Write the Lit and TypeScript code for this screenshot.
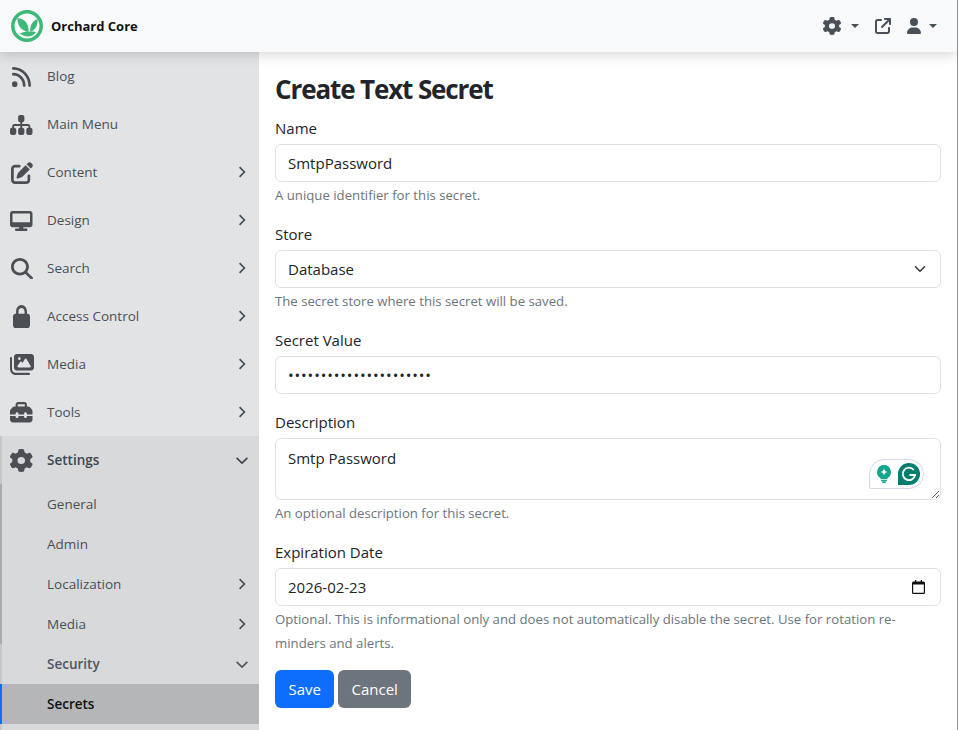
import { LitElement, html, css, svg } from 'lit';
import { customElement } from 'lit/decorators.js';

// w, h are the drawn size; box is the part of the FontAwesome glyph that gets stretched into it
type Icon = { w: number; h: number; box: string; d: string };

const ICONS: Record<string, Icon> = {
  rss: { w: 19, h: 20, box: '0 32 448 448', d: 'M0 64C0 46.3 14.3 32 32 32c229.8 0 416 186.2 416 416c0 17.7-14.3 32-32 32s-32-14.3-32-32C384 253.6 226.4 96 32 96C14.3 96 0 81.7 0 64zM0 416a64 64 0 1 1 128 0A64 64 0 1 1 0 416zM32 160c159.1 0 288 128.9 288 288c0 17.7-14.3 32-32 32s-32-14.3-32-32c0-123.7-100.3-224-224-224c-17.7 0-32-14.3-32-32s14.3-32 32-32z' },
  sitemap: { w: 22.5, h: 20, box: '0 32 576 448', d: 'M208 80c0-26.5 21.5-48 48-48h64c26.5 0 48 21.5 48 48v64c0 26.5-21.5 48-48 48h-8v40H464c30.9 0 56 25.1 56 56v32h8c26.5 0 48 21.5 48 48v64c0 26.5-21.5 48-48 48H464c-26.5 0-48-21.5-48-48V368c0-26.5 21.5-48 48-48h8V288c0-4.4-3.6-8-8-8H312v40h8c26.5 0 48 21.5 48 48v64c0 26.5-21.5 48-48 48H256c-26.5 0-48-21.5-48-48V368c0-26.5 21.5-48 48-48h8V280H112c-4.4 0-8 3.6-8 8v32h8c26.5 0 48 21.5 48 48v64c0 26.5-21.5 48-48 48H48c-26.5 0-48-21.5-48-48V368c0-26.5 21.5-48 48-48h8V288c0-30.9 25.1-56 56-56H264V192h-8c-26.5 0-48-21.5-48-48V80z' },
  pen: { w: 22, h: 22, box: '0 0 512 512', d: 'M471.6 21.7c-21.9-21.9-57.3-21.9-79.2 0L362.3 51.7l97.9 97.9 30.1-30.1c21.9-21.9 21.9-57.3 0-79.2L471.6 21.7zm-299.2 220c-6.1 6.1-10.8 13.6-13.5 21.9l-29.6 88.8c-2.9 8.6-.6 18.1 5.8 24.6s15.9 8.7 24.6 5.8l88.8-29.6c8.2-2.7 15.7-7.4 21.9-13.5L437.7 172.3 339.7 74.3 172.4 241.7zM96 64C43 64 0 107 0 160V416c0 53 43 96 96 96H352c53 0 96-43 96-96V320c0-17.7-14.3-32-32-32s-32 14.3-32 32v96c0 17.7-14.3 32-32 32H96c-17.7 0-32-14.3-32-32V160c0-17.7 14.3-32 32-32h96c17.7 0 32-14.3 32-32s-14.3-32-32-32H96z' },
  desktop: { w: 22.5, h: 20, box: '0 0 576 512', d: 'M64 0C28.7 0 0 28.7 0 64V352c0 35.3 28.7 64 64 64H240l-10.7 32H160c-17.7 0-32 14.3-32 32s14.3 32 32 32H416c17.7 0 32-14.3 32-32s-14.3-32-32-32H346.7L336 416H512c35.3 0 64-28.7 64-64V64c0-35.3-28.7-64-64-64H64zM512 64V288H64V64H512z' },
  search: { w: 22, h: 21.5, box: '0 0 512 512', d: 'M416 208c0 45.9-14.9 88.3-40 122.7L502.6 457.4c12.5 12.5 12.5 32.8 0 45.3s-32.8 12.5-45.3 0L330.7 376c-34.4 25.2-76.8 40-122.7 40C93.1 416 0 322.9 0 208S93.1 0 208 0S416 93.1 416 208zM208 352a144 144 0 1 0 0-288 144 144 0 1 0 0 288z' },
  lock: { w: 17, h: 23, box: '0 0 448 512', d: 'M144 144v48H304V144c0-44.2-35.8-80-80-80s-80 35.8-80 80zM80 192V144C80 64.5 144.5 0 224 0s144 64.5 144 144v48h16c35.3 0 64 28.7 64 64V448c0 35.3-28.7 64-64 64H64c-35.3 0-64-28.7-64-64V256c0-35.3 28.7-64 64-64H80z' },
  images: { w: 24, h: 21, box: '0 32 576 448', d: 'M160 32c-35.3 0-64 28.7-64 64V320c0 35.3 28.7 64 64 64H512c35.3 0 64-28.7 64-64V96c0-35.3-28.7-64-64-64H160zM396 138.7l96 144c4.9 7.4 5.4 16.8 1.2 24.6S480.9 320 472 320H328 280 200c-9.2 0-17.6-5.3-21.6-13.6s-2.9-18.2 2.9-25.4l64-80c4.6-5.7 11.4-9 18.7-9s14.2 3.3 18.7 9l17.3 21.6 56-84C360.5 132 368 128 376 128s15.5 4 20 10.7zM192 128a32 32 0 1 1 64 0 32 32 0 1 1 -64 0zM48 120c0-13.3-10.7-24-24-24S0 106.7 0 120V344c0 75.1 60.9 136 136 136H456c13.3 0 24-10.7 24-24s-10.7-24-24-24H136c-48.6 0-88-39.4-88-88V120z' },
  toolbox: { w: 22.5, h: 20.5, box: '0 32 512 448', d: 'M176 88v40H336V88c0-4.4-3.6-8-8-8H184c-4.4 0-8 3.6-8 8zm-48 40V88c0-30.9 25.1-56 56-56H328c30.9 0 56 25.1 56 56v40h28.1c12.7 0 24.9 5.1 33.9 14.1l51.9 51.9c9 9 14.1 21.2 14.1 33.9V304H384V288c0-17.7-14.3-32-32-32s-32 14.3-32 32v16H192V288c0-17.7-14.3-32-32-32s-32 14.3-32 32v16H0V227.9c0-12.7 5.1-24.9 14.1-33.9l51.9-51.9c9-9 21.2-14.1 33.9-14.1H128zM0 416V336H128v16c0 17.7 14.3 32 32 32s32-14.3 32-32V336H320v16c0 17.7 14.3 32 32 32s32-14.3 32-32V336H512v80c0 35.3-28.7 64-64 64H64c-35.3 0-64-28.7-64-64z' },
  gear: { w: 22.5, h: 23, box: '16 0 480 512', d: 'M495.9 166.6c3.2 8.7 .5 18.4-6.4 24.6l-43.3 39.4c1.1 8.3 1.7 16.8 1.7 25.4s-.6 17.1-1.7 25.4l43.3 39.4c6.9 6.2 9.6 15.9 6.4 24.6c-4.4 11.9-9.7 23.3-15.8 34.3l-4.7 8.1c-6.6 11-14 21.4-22.1 31.2c-5.9 7.2-15.7 9.6-24.5 6.8l-55.7-17.7c-13.4 10.3-28.2 18.9-44 25.4l-12.5 57.1c-2 9.1-9 16.3-18.2 17.8c-13.8 2.3-28 3.5-42.5 3.5s-28.7-1.2-42.5-3.5c-9.2-1.5-16.2-8.7-18.2-17.8l-12.5-57.1c-15.8-6.5-30.6-15.1-44-25.4L83.1 425.9c-8.8 2.8-18.6 .3-24.5-6.8c-8.1-9.8-15.5-20.2-22.1-31.2l-4.7-8.1c-6.1-11-11.4-22.4-15.8-34.3c-3.2-8.7-.5-18.4 6.4-24.6l43.3-39.4C64.6 273.1 64 264.6 64 256s.6-17.1 1.7-25.4L22.4 191.2c-6.9-6.2-9.6-15.9-6.4-24.6c4.4-11.9 9.7-23.3 15.8-34.3l4.7-8.1c6.6-11 14-21.4 22.1-31.2c5.9-7.2 15.7-9.6 24.5-6.8l55.7 17.7c13.4-10.3 28.2-18.9 44-25.4l12.5-57.1c2-9.1 9-16.3 18.2-17.8C227.3 1.2 241.5 0 256 0s28.7 1.2 42.5 3.5c9.2 1.5 16.2 8.7 18.2 17.8l12.5 57.1c15.8 6.5 30.6 15.1 44 25.4l55.7-17.7c8.8-2.8 18.6-.3 24.5 6.8c8.1 9.8 15.5 20.2 22.1 31.2l4.7 8.1c6.1 11 11.4 22.4 15.8 34.3zM256 336a80 80 0 1 0 0-160 80 80 0 1 0 0 160z' },
  user: { w: 14, h: 16, box: '0 0 448 512', d: 'M224 256A128 128 0 1 0 224 0a128 128 0 1 0 0 256zm-45.7 48C79.8 304 0 383.8 0 482.3C0 498.7 13.3 512 29.7 512H418.3c16.4 0 29.7-13.3 29.7-29.7C448 383.8 368.2 304 269.7 304H178.3z' },
  external: { w: 16, h: 16, box: '0 0 512 512', d: 'M320 0c-17.7 0-32 14.3-32 32s14.3 32 32 32h82.7L201.4 265.4c-12.5 12.5-12.5 32.8 0 45.3s32.8 12.5 45.3 0L448 109.3V192c0 17.7 14.3 32 32 32s32-14.3 32-32V32c0-17.7-14.3-32-32-32H320zM80 32C35.8 32 0 67.8 0 112V432c0 44.2 35.8 80 80 80H400c44.2 0 80-35.8 80-80V320c0-17.7-14.3-32-32-32s-32 14.3-32 32V432c0 8.8-7.2 16-16 16H80c-8.8 0-16-7.2-16-16V112c0-8.8 7.2-16 16-16H192c17.7 0 32-14.3 32-32s-14.3-32-32-32H80z' },
};

const icon = (name: string, w?: number, h?: number) => {
  const i = ICONS[name];
  return html`<svg width=${w ?? i.w} height=${h ?? i.h} viewBox=${i.box} preserveAspectRatio="none" fill="currentColor">${svg`<path d=${i.d}></path>`}</svg>`;
};

const chevronRight = html`<svg class="chev" width="12" height="12" viewBox="0 0 12 12"><path d="M3.6 1.2 8.4 6l-4.8 4.8" fill="none" stroke="currentColor" stroke-width="1.7"></path></svg>`;
const chevronDown = html`<svg class="chev down" width="14" height="12" viewBox="0 0 14 12"><path d="M1.6 3.8 7 9l5.4-5.2" fill="none" stroke="currentColor" stroke-width="1.7"></path></svg>`;

const TOP_ITEMS = [
  { label: 'Blog', icon: 'rss', more: false },
  { label: 'Main Menu', icon: 'sitemap', more: false },
  { label: 'Content', icon: 'pen', more: true },
  { label: 'Design', icon: 'desktop', more: true },
  { label: 'Search', icon: 'search', more: true },
  { label: 'Access Control', icon: 'lock', more: true },
  { label: 'Media', icon: 'images', more: true },
  { label: 'Tools', icon: 'toolbox', more: true },
];

const SUB_ITEMS = [
  { label: 'General', more: false },
  { label: 'Admin', more: false },
  { label: 'Localization', more: true },
  { label: 'Media', more: true },
];

@customElement('app-root')
export class AppRoot extends LitElement {
  static override styles = css`
    :host {
      display: flex;
      flex-direction: column;
      height: 730px;
      overflow: hidden;
      font-family: "Open Sans", "Noto Sans", sans-serif;
      font-size: 15px;
      color: #212529;
      background: #fff;
      box-sizing: border-box;
      border-right: 1px solid #8a8a8a;
    }
    * { box-sizing: border-box; }

    .navbar {
      flex: none;
      height: 52px;
      display: flex;
      align-items: center;
      padding: 0 20px 0 11px;
      background: #f8f9fa;
      box-shadow: 0 2px 12px rgba(0, 0, 0, 0.18);
      position: relative;
      z-index: 2;
    }
    .brand {
      display: flex;
      align-items: center;
      gap: 8px;
      font-size: 13px;
      font-weight: 700;
      color: #111;
    }
    .actions {
      margin-left: auto;
      display: flex;
      align-items: center;
      color: #495057;
    }
    .actions svg { display: block; }
    .caret {
      width: 0;
      height: 0;
      border-left: 4px solid transparent;
      border-right: 4px solid transparent;
      border-top: 4px solid currentColor;
    }
    .gear { margin-right: 10px; }
    .ext { margin: 0 16px; }
    .usr { margin-right: 8px; }

    .body {
      flex: 1;
      display: flex;
      min-height: 0;
    }

    .sidebar {
      flex: none;
      width: 259px;
      background: #e2e3e5;
      color: #495057;
      font-size: 13.5px;
      overflow: hidden;
    }
    .item {
      display: flex;
      align-items: center;
      height: 48px;
      padding-right: 10px;
    }
    .item .ico {
      flex: none;
      width: 47px;
      padding: 1px 13px 0 9px;
      display: flex;
      justify-content: center;
      color: #4b4f53;
    }
    .chev { margin-left: auto; margin-right: 1px; }
    .chev.down { margin-right: 0; }

    .group {
      background: #d8d9db;
      border-left: 2px solid #c6c7c9;
    }
    .group .item.open { font-weight: 600; color: #3f464d; }
    .group .item.open .ico { width: 45px; padding-left: 7px; }
    .subs { border-left: 2px solid #a9aaac; margin-left: -2px; }
    .sub {
      display: flex;
      align-items: center;
      height: 40px;
      padding-left: 45px;
      padding-right: 10px;
    }
    .sub.sec { margin-left: -2px; border-left: 2px solid #c6c7c9; font-weight: 600; color: #50565c; }
    .sub.active {
      margin-left: -2px;
      border-left: 2px solid #0d6efd;
      background: #b5b6b8;
      color: #111;
      font-weight: 600;
    }

    .main {
      flex: 1;
      min-width: 0;
      padding: 20px 16px 0;
    }
    h1 {
      margin: 0 0 11px;
      font-size: 26px;
      line-height: 34px;
      font-weight: 700;
      letter-spacing: -1.12px;
      color: #212529;
    }
    .field { margin-bottom: 16px; }
    .field.bare { margin-bottom: 17px; }
    label {
      display: block;
      line-height: 22px;
      margin-bottom: 5px;
    }
    .control {
      display: block;
      width: 100%;
      height: 38px;
      padding: 0 12px;
      border: 1px solid #dee2e6;
      border-radius: 6px;
      background: #fff;
      color: #212529;
      font: inherit;
      outline: none;
    }
    input[type="password"] { letter-spacing: 0.9px; }
    select.control {
      appearance: none;
      background-image: url("data:image/svg+xml,%3csvg xmlns='http://www.w3.org/2000/svg' viewBox='0 0 16 16'%3e%3cpath fill='none' stroke='%23343a40' stroke-linecap='round' stroke-linejoin='round' stroke-width='2' d='m2 5 6 6 6-6'/%3e%3c/svg%3e");
      background-repeat: no-repeat;
      background-position: right 12px center;
      background-size: 16px 12px;
    }
    .area { position: relative; }
    textarea.control {
      height: 62px;
      padding: 7px 12px;
      line-height: 24px;
      resize: vertical;
    }
    .grammarly {
      position: absolute;
      right: 17px;
      bottom: 11px;
      width: 55px;
      height: 30px;
      display: flex;
      align-items: center;
      gap: 6px;
      padding-left: 6px;
      background: #fff;
      border: 1px solid #d6d6e6;
      border-radius: 15px 15px 15px 2px;
    }
    .calendar {
      position: absolute;
      right: 16px;
      top: 12px;
      display: block;
    }
    .help {
      margin-top: 1px;
      font-size: 13.2px;
      line-height: 24px;
      color: #6c757d;
    }
    .buttons {
      display: flex;
      gap: 4px;
      margin-top: -1px;
    }
    button {
      height: 38px;
      padding: 0 13.5px;
      border: 0;
      border-radius: 6px;
      color: #fff;
      font: inherit;
    }
    .save { background: #0d6efd; }
    .cancel { background: #6c757d; padding: 0 13px; }
  `;

  override render() {
    return html`
      <header class="navbar">
        <div class="brand">
          <svg width="32" height="32" viewBox="0 0 32 32">
            <circle cx="16" cy="16" r="14.2" fill="#fff" stroke="#3cb878" stroke-width="3.5"></circle>
            <path d="M6.5 8C13 8.5 18 13 17.5 22 11 21 6 16 6.5 8z" fill="#3cb878"></path>
            <path d="M26.5 9C27 15 24.5 20 19.5 22 18.5 16 21 11 26.5 9z" fill="#3cb878"></path>
            <path d="M9 23.5C13 21.5 19 21 25 22 21.5 27.5 14 28 9 23.5z" fill="#3cb878"></path>
          </svg>
          <span>Orchard Core</span>
        </div>
        <div class="actions">
          <span class="gear">${icon('gear', 18, 18)}</span>
          <span class="caret"></span>
          <span class="ext">${icon('external')}</span>
          <span class="usr">${icon('user')}</span>
          <span class="caret"></span>
        </div>
      </header>
      <div class="body">
        <nav class="sidebar">
          ${TOP_ITEMS.map(i => html`
            <div class="item">
              <span class="ico">${icon(i.icon)}</span>
              <span>${i.label}</span>
              ${i.more ? chevronRight : null}
            </div>
          `)}
          <div class="group">
            <div class="item open">
              <span class="ico">${icon('gear')}</span>
              <span>Settings</span>
              ${chevronDown}
            </div>
            <div class="subs">
              ${SUB_ITEMS.map(i => html`
                <div class="sub">
                  <span>${i.label}</span>
                  ${i.more ? chevronRight : null}
                </div>
              `)}
            </div>
            <div class="sub sec">
              <span>Security</span>
              ${chevronDown}
            </div>
            <div class="sub active"><span>Secrets</span></div>
            <div class="sub"></div>
          </div>
        </nav>
        <main class="main">
          <h1>Create Text Secret</h1>
          <div class="field">
            <label>Name</label>
            <input class="control" type="text" .value=${'SmtpPassword'} />
            <div class="help">A unique identifier for this secret.</div>
          </div>
          <div class="field">
            <label>Store</label>
            <select class="control"><option>Database</option></select>
            <div class="help">The secret store where this secret will be saved.</div>
          </div>
          <div class="field bare">
            <label>Secret Value</label>
            <input class="control" type="password" .value=${'abcdefghijklmnopqrstuv'} />
          </div>
          <div class="field">
            <label>Description</label>
            <div class="area">
              <textarea class="control" .value=${'Smtp Password'}></textarea>
              <div class="grammarly">
                <svg width="16" height="18" viewBox="0 0 16 18">
                  <path d="M8 0a7 7 0 0 1 3.5 13v1.3h-7V13A7 7 0 0 1 8 0z" fill="#15a58c"></path>
                  <path d="M8 3.6l1 2.4 2.4 1-2.4 1-1 2.4-1-2.4-2.4-1 2.4-1z" fill="#fff"></path>
                  <rect x="5" y="15" width="6" height="1.5" rx=".7" fill="#15a58c"></rect>
                  <rect x="6.2" y="16.8" width="3.6" height="1.2" rx=".6" fill="#15a58c"></rect>
                </svg>
                <svg width="22" height="22" viewBox="0 0 22 22">
                  <path d="M11 0a11 11 0 1 1 0 22H0V11A11 11 0 0 1 11 0z" fill="#027e6f"></path>
                  <path d="M15.8 7a6.2 6.2 0 1 0 1.300 5H11.500" fill="none" stroke="#fff" stroke-width="1.8"></path>
                </svg>
              </div>
            </div>
            <div class="help">An optional description for this secret.</div>
          </div>
          <div class="field">
            <label>Expiration Date</label>
            <div class="area">
              <input class="control" type="text" .value=${'2026-02-23'} />
              <svg class="calendar" width="13" height="14" viewBox="0 0 13 14">
                <path d="M3 0h1.300v1.500h4.400V0H10v1.500h1.500A1.500 1.500 0 0 1 13 3v9.500a1.500 1.500 0 0 1-1.500 1.500h-10A1.500 1.500 0 0 1 0 12.500V3a1.500 1.500 0 0 1 1.500-1.500H3zM1.200 4.500v8c0 .2.100.3.300.3h10c.2 0 .3-.1.300-.3v-8z" fill="#111"></path>
              </svg>
            </div>
            <div class="help">Optional. This is informational only and does not automatically disable the secret. Use for rotation re-minders and alerts.</div>
          </div>
          <div class="buttons">
            <button class="save">Save</button>
            <button class="cancel">Cancel</button>
          </div>
        </main>
      </div>
    `;
  }
}
